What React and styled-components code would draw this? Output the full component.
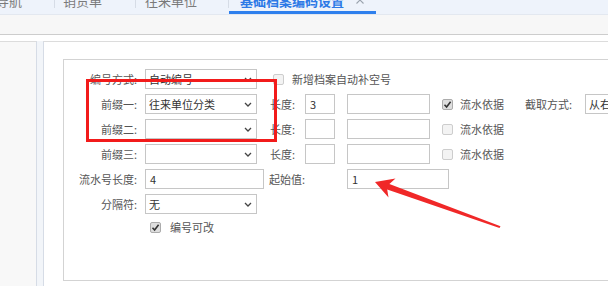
import React from "react";
import styled, { createGlobalStyle } from "styled-components";

const GlobalStyle = createGlobalStyle`
  html, body {
    margin: 0;
    padding: 0;
    background: #fff;
  }
  body {
    width: 608px;
    height: 286px;
    overflow: hidden;
    font-family: "Noto Sans CJK SC", "Noto Sans", sans-serif;
  }
`;

const Page = styled.div({
  position: "relative",
  width: "608px",
  height: "286px",
  overflow: "hidden",
  display: "flex",
  flexDirection: "column",
});

const TabBar = styled.div({
  display: "flex",
  alignItems: "flex-start",
  height: "14px",
  marginLeft: "-13px",
  background: "#eef3fb",
  borderBottom: "1px solid #e3e8f0",
  overflow: "hidden",
  flexShrink: 0,
});

const Tab = styled.div(({ $active, $pl, $pr }) => ({
  display: "flex",
  alignItems: "flex-start",
  gap: "12px",
  height: "14px",
  boxSizing: "border-box",
  padding: `0 ${$pr}px 0 ${$pl}px`,
  color: $active ? "#2c79e6" : "#7a7a7a",
  fontSize: "13px",
  lineHeight: "13px",
  fontWeight: $active ? 700 : 400,
  borderBottom: `3px solid ${$active ? "#2f80ed" : "transparent"}`,
  whiteSpace: "nowrap",
  flexShrink: 0,
}));

const TabText = styled.span({
  marginTop: "-6px",
});

const TabClose = styled.svg({
  marginTop: "-4px",
  flexShrink: 0,
});

const TabDivider = styled.span({
  width: "1px",
  height: "8px",
  background: "#d6dce6",
  flexShrink: 0,
});

const Toolbar = styled.div({
  height: "19px",
  background: "#f7f7f7",
  borderBottom: "1px solid #cdcdcd",
  flexShrink: 0,
});

const Body = styled.div({
  flex: 1,
  display: "flex",
  paddingTop: "6px",
  minHeight: 0,
});

const LeftPanel = styled.div({
  width: "37px",
  boxSizing: "border-box",
  background: "#f8f8f8",
  borderTop: "1px solid #dcdcdc",
  borderRight: "1px solid #d6dce6",
  flexShrink: 0,
});

const Splitter = styled.div({
  width: "6px",
  background: "#f2f5f9",
  flexShrink: 0,
});

const MainPanel = styled.div({
  flex: 1,
  minWidth: 0,
  overflow: "hidden",
  borderTop: "1px solid #dcdcdc",
  borderLeft: "1px solid #d6dce6",
  padding: "17px 0 0 19px",
});

const Group = styled.div({
  width: "640px",
  height: "222px",
  boxSizing: "border-box",
  border: "1px solid #d3d3d3",
  paddingTop: "9px",
  display: "flex",
  flexDirection: "column",
  gap: "5px",
});

const Row = styled.div(({ $h = 20 }) => ({
  display: "flex",
  alignItems: "center",
  height: `${$h}px`,
  fontSize: "11px",
  color: "#555",
  whiteSpace: "nowrap",
}));

const Label = styled.span({
  width: "73px",
  marginRight: "8px",
  textAlign: "right",
  flexShrink: 0,
});

const InlineLabel = styled.span(({ $ml = 0, $w }) => ({
  width: `${$w}px`,
  marginLeft: `${$ml}px`,
  flexShrink: 0,
}));

const SelectBox = styled.div(({ $w }) => ({
  width: `${$w}px`,
  height: "20px",
  boxSizing: "border-box",
  border: "1px solid #c6c6c6",
  padding: "0 4px 0 3px",
  display: "flex",
  alignItems: "center",
  justifyContent: "space-between",
  color: "#333",
  background: "#fff",
  flexShrink: 0,
}));

const Field = styled.div(({ $w, $ml = 0 }) => ({
  width: `${$w}px`,
  height: "20px",
  marginLeft: `${$ml}px`,
  boxSizing: "border-box",
  border: "1px solid #c6c6c6",
  paddingLeft: "4px",
  display: "flex",
  alignItems: "center",
  color: "#333",
  background: "#fff",
  flexShrink: 0,
}));

const CheckBox = styled.span(({ $checked, $ml = 0 }) => ({
  width: "11px",
  height: "11px",
  marginLeft: `${$ml}px`,
  boxSizing: "border-box",
  border: `1px solid ${$checked ? "#acacac" : "#cdcdcd"}`,
  borderRadius: "2px",
  background: $checked ? "#dedede" : "#f3f3f3",
  display: "flex",
  alignItems: "center",
  justifyContent: "center",
  flexShrink: 0,
}));

const CheckText = styled.span(({ $ml = 0 }) => ({
  marginLeft: `${$ml}px`,
}));

const Highlight = styled.div({
  position: "absolute",
  left: "86px",
  top: "79px",
  width: "191px",
  height: "63px",
  boxSizing: "border-box",
  border: "3px solid #f21b1b",
  pointerEvents: "none",
});

const ArrowLayer = styled.svg({
  position: "absolute",
  left: 0,
  top: 0,
  pointerEvents: "none",
});

const Chevron = () => (
  <svg width="8" height="5" viewBox="0 0 8 5">
    <path d="M1 1 L4 4 L7 1" fill="none" stroke="#444" strokeWidth="1.3" />
  </svg>
);

const Select = ({ w = 112, value }) => (
  <SelectBox $w={w}>
    <span>{value}</span>
    <Chevron />
  </SelectBox>
);

const Check = ({ checked, ml }) => (
  <CheckBox $checked={checked} $ml={ml}>
    {checked && (
      <svg width="9" height="9" viewBox="0 0 9 9">
        <path d="M1.5 4.8 L3.6 7 L7.6 1.8" fill="none" stroke="#333" strokeWidth="1.6" />
      </svg>
    )}
  </CheckBox>
);

const PrefixRow = ({ label, value, length, checked, children }) => (
  <Row>
    <Label>{label}</Label>
    <Select value={value} />
    <InlineLabel $ml={13} $w={28}>长度:</InlineLabel>
    <Field $w={30} $ml={7}>{length}</Field>
    <Field $w={83} $ml={12} />
    <Check checked={checked} ml={12} />
    <CheckText $ml={7}>流水依据</CheckText>
    {children}
  </Row>
);

const App = () => (
  <Page>
    <GlobalStyle />
    <TabBar>
      <Tab $pl={9} $pr={32}>
        <TabText>导航</TabText>
      </Tab>
      <TabDivider />
      <Tab $pl={8} $pr={33}>
        <TabText>销货单</TabText>
      </Tab>
      <TabDivider />
      <Tab $pl={9} $pr={31}>
        <TabText>往来单位</TabText>
      </Tab>
      <TabDivider />
      <Tab $active $pl={11} $pr={12}>
        <TabText>基础档案编码设置</TabText>
        <TabClose width="8" height="8" viewBox="0 0 8 8">
          <path d="M0.5 0.5 L7.5 7.5 M7.5 0.5 L0.5 7.5" stroke="#9aa3ae" strokeWidth="1.1" />
        </TabClose>
      </Tab>
    </TabBar>
    <Toolbar />
    <Body>
      <LeftPanel />
      <Splitter />
      <MainPanel>
        <Group>
          <Row>
            <Label>编号方式:</Label>
            <Select value="自动编号" />
            <Check ml={16} />
            <CheckText $ml={8}>新增档案自动补空号</CheckText>
          </Row>
          <PrefixRow label="前缀一:" value="往来单位分类" length="3" checked>
            <InlineLabel $ml={21} $w={60}>截取方式:</InlineLabel>
            <Select w={90} value="从右" />
          </PrefixRow>
          <PrefixRow label="前缀二:" />
          <PrefixRow label="前缀三:" />
          <Row>
            <Label>流水号长度:</Label>
            <Field $w={119}>4</Field>
            <InlineLabel $ml={5} $w={78}>起始值:</InlineLabel>
            <Field $w={102}>1</Field>
          </Row>
          <Row>
            <Label>分隔符:</Label>
            <Select value="无" />
          </Row>
          <Row $h={16}>
            <Label />
            <Check checked ml={5} />
            <CheckText $ml={9}>编号可改</CheckText>
          </Row>
        </Group>
      </MainPanel>
    </Body>
    <Highlight />
    <ArrowLayer width="608" height="286" viewBox="0 0 608 286">
      <polygon
        points="375,182 395.5,178.5 389.4,184 500.5,226.2 499.5,228 387.2,189.6 388.5,197.5"
        fill="#f02828"
      />
    </ArrowLayer>
  </Page>
);

export default App;
